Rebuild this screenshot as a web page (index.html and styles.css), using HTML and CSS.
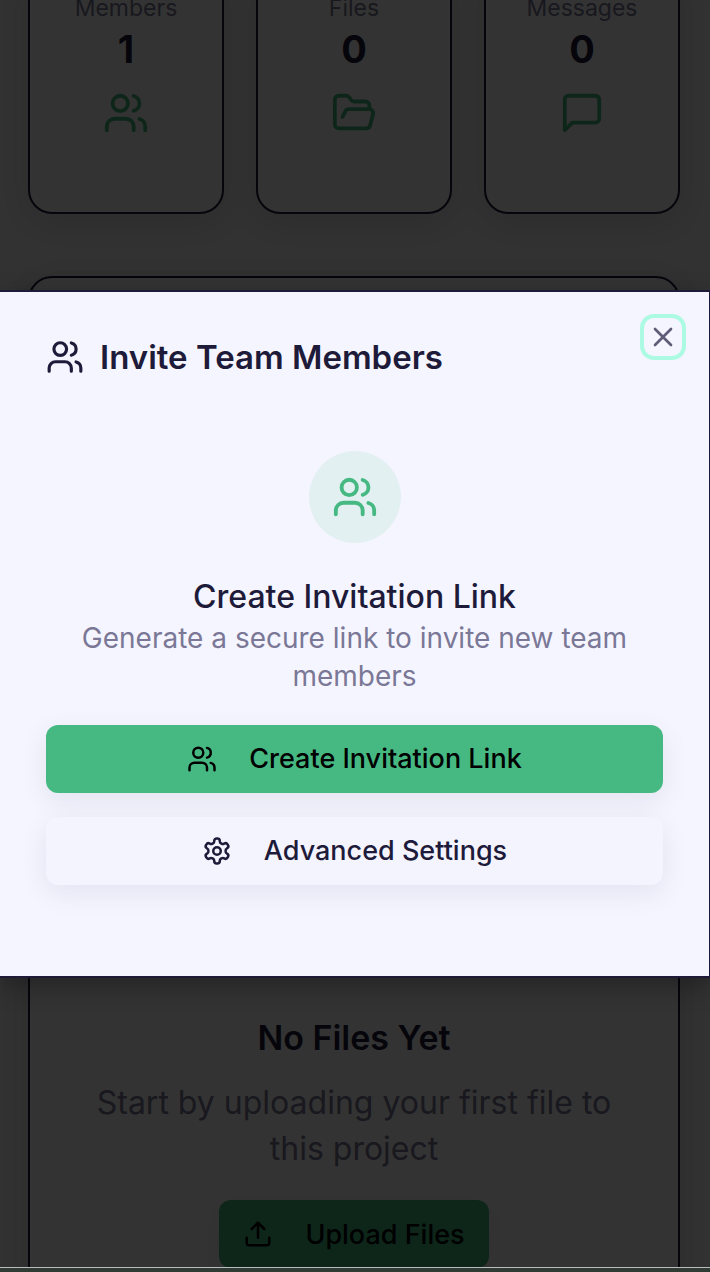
FILE: index.html
```html
<!DOCTYPE html>
<html lang="en">
<head>
<meta charset="utf-8">
<meta name="viewport" content="width=device-width, initial-scale=1">
<title>Invite Team Members</title>
<link rel="stylesheet" href="styles.css">
</head>
<body>
<svg class="sprite" aria-hidden="true">
  <symbol id="users" viewBox="0 0 24 24"><path d="M16 21v-2a4 4 0 0 0-4-4H6a4 4 0 0 0-4 4v2"/><circle cx="9" cy="7" r="4"/><path d="M22 21v-2a4 4 0 0 0-3-3.87"/><path d="M16 3.13a4 4 0 0 1 0 7.75"/></symbol>
  <symbol id="folder" viewBox="0 0 24 24"><path d="m6 14 1.5-2.9A2 2 0 0 1 9.24 10H20a2 2 0 0 1 1.94 2.5l-1.54 6a2 2 0 0 1-1.95 1.5H4a2 2 0 0 1-2-2V5a2 2 0 0 1 2-2h3.9a2 2 0 0 1 1.69.9l.81 1.2a2 2 0 0 0 1.67.9H18a2 2 0 0 1 2 2v2"/></symbol>
  <symbol id="message" viewBox="0 0 24 24"><path d="M21 15a2 2 0 0 1-2 2H7l-4 4V5a2 2 0 0 1 2-2h14a2 2 0 0 1 2 2z"/></symbol>
  <symbol id="close" viewBox="0 0 24 24"><path d="M18 6 6 18M6 6l12 12"/></symbol>
  <symbol id="settings" viewBox="0 0 24 24"><path d="M12.22 2h-.44a2 2 0 0 0-2 2v.18a2 2 0 0 1-1 1.73l-.43.25a2 2 0 0 1-2 0l-.15-.08a2 2 0 0 0-2.73.73l-.22.38a2 2 0 0 0 .73 2.73l.15.1a2 2 0 0 1 1 1.72v.51a2 2 0 0 1-1 1.74l-.15.09a2 2 0 0 0-.73 2.73l.22.38a2 2 0 0 0 2.73.73l.15-.08a2 2 0 0 1 2 0l.43.25a2 2 0 0 1 1 1.73V20a2 2 0 0 0 2 2h.44a2 2 0 0 0 2-2v-.18a2 2 0 0 1 1-1.73l.43-.25a2 2 0 0 1 2 0l.15.08a2 2 0 0 0 2.73-.73l.22-.39a2 2 0 0 0-.73-2.73l-.15-.08a2 2 0 0 1-1-1.74v-.5a2 2 0 0 1 1-1.74l.15-.09a2 2 0 0 0 .73-2.73l-.22-.38a2 2 0 0 0-2.73-.73l-.15.08a2 2 0 0 1-2 0l-.43-.25a2 2 0 0 1-1-1.73V4a2 2 0 0 0-2-2z"/><circle cx="12" cy="12" r="3"/></symbol>
  <symbol id="upload" viewBox="0 0 24 24"><path d="M12 15V3M17 8l-5-5-5 5M21 15v4a2 2 0 0 1-2 2H5a2 2 0 0 1-2-2v-4"/></symbol>
</svg>
<div class="app">
  <div class="screen">
    <main class="page">
      <section class="stats">
        <div class="card stat">
          <span class="stat-label">Members</span>
          <strong class="stat-value">1</strong>
          <svg class="icon icon-lg"><use href="#users"/></svg>
        </div>
        <div class="card stat">
          <span class="stat-label">Files</span>
          <strong class="stat-value">0</strong>
          <svg class="icon icon-lg"><use href="#folder"/></svg>
        </div>
        <div class="card stat">
          <span class="stat-label">Messages</span>
          <strong class="stat-value">0</strong>
          <svg class="icon icon-lg"><use href="#message"/></svg>
        </div>
      </section>
      <section class="card files">
        <h2 class="files-title">No Files Yet</h2>
        <p class="files-text">Start by uploading your first file to this project</p>
        <button class="btn btn-primary" type="button"><svg class="icon icon-sm"><use href="#upload"/></svg>Upload Files</button>
      </section>
    </main>
    <div class="overlay">
      <div class="dialog" role="dialog" aria-modal="true" aria-labelledby="dialog-title">
        <header class="dialog-header">
          <svg class="icon icon-md"><use href="#users"/></svg>
          <h1 class="dialog-title" id="dialog-title">Invite Team Members</h1>
        </header>
        <button class="close" type="button" aria-label="Close"><svg class="icon icon-close"><use href="#close"/></svg></button>
        <div class="badge"><svg class="icon icon-lg"><use href="#users"/></svg></div>
        <h2 class="invite-title">Create Invitation Link</h2>
        <p class="invite-text">Generate a secure link to invite new team members</p>
        <div class="actions">
          <button class="btn btn-primary" type="button"><svg class="icon icon-sm"><use href="#users"/></svg>Create Invitation Link</button>
          <button class="btn btn-plain" type="button"><svg class="icon icon-sm"><use href="#settings"/></svg>Advanced Settings</button>
        </div>
      </div>
    </div>
  </div>
  <div class="strip"></div>
</div>
</body>
</html>
```
FILE: styles.css
```css
:root {
  --ink: #1e1b3a;
  --muted: #7a7896;
  --green: #46b982;
  --surface: #f5f5ff;
}

* { box-sizing: border-box; }

body {
  margin: 0;
  font-family: Inter, "Liberation Sans", sans-serif;
  color: var(--ink);
}

h1, h2, p { margin: 0; }

.sprite { display: none; }

.icon {
  flex: none;
  fill: none;
  stroke: currentColor;
  stroke-width: 2;
  stroke-linecap: round;
  stroke-linejoin: round;
}
.icon-sm { width: 30px; height: 30px; }
.icon-close { width: 32px; height: 32px; }
.icon-md { width: 38px; height: 38px; }
.icon-lg { width: 46px; height: 46px; color: var(--green); }

.app {
  display: grid;
  grid-template-rows: 1fr 4px;
  height: 100vh;
}

.screen {
  position: relative;
  min-height: 0;
  overflow: hidden;
  background: #f8f8fc;
  border-bottom: 1px solid #b8bcc0;
}

.strip { background: #303c33; }

.page {
  display: flex;
  flex-direction: column;
  gap: 62px;
  margin-top: -40px;
  padding: 0 30px 0 28px;
}

.card {
  background: #fff;
  border: 2px solid var(--ink);
  border-radius: 24px;
  box-shadow: 0 8px 32px rgba(30, 27, 58, 0.14);
}

.stats {
  display: grid;
  grid-template-columns: repeat(3, 1fr);
  gap: 32px;
}

.stat {
  display: flex;
  flex-direction: column;
  align-items: center;
  padding: 30px 8px 76px;
}
.stat-label { font-size: 23px; line-height: 32px; color: var(--muted); }
.stat-value { font-size: 38px; line-height: 50px; margin-bottom: 16px; }

.files {
  display: flex;
  flex-direction: column;
  align-items: center;
  padding: 736px 56px 64px;
  text-align: center;
}
.files-title { font-size: 34px; line-height: 48px; font-weight: 600; }
.files-text {
  margin: 18px 0 28px;
  font-size: 32px;
  line-height: 46px;
  color: var(--muted);
}

.btn {
  display: flex;
  align-items: center;
  justify-content: center;
  gap: 32px;
  min-height: 68px;
  padding: 0 24px;
  border: 0;
  border-radius: 12px;
  font-family: inherit;
  font-size: 27px;
  font-weight: 500;
  box-shadow: 0 8px 28px rgba(30, 27, 58, 0.08);
}
.btn-primary { background: var(--green); color: #000; }
.btn-plain { background: #f4f4fe; color: var(--ink); }

.overlay {
  position: absolute;
  inset: 0;
  display: flex;
  align-items: center;
  background: rgba(0, 0, 0, 0.8);
}

.dialog {
  position: relative;
  flex: 1;
  padding: 42px 46px 91px;
  background: var(--surface);
  border: 2px solid var(--ink);
  border-width: 2px 1px 2px 0;
  box-shadow: 0 8px 24px rgba(0, 0, 0, 0.3);
  text-align: center;
}

.dialog-header {
  display: flex;
  align-items: center;
  gap: 16px;
}
.dialog-title { font-size: 33px; line-height: 46px; font-weight: 600; }

.close {
  position: absolute;
  top: 22px;
  right: 23px;
  display: grid;
  place-items: center;
  width: 46px;
  height: 46px;
  padding: 0;
  border: 4px solid #adfae3;
  border-radius: 14px;
  background: var(--surface);
  color: #5f5c78;
}

.badge {
  display: grid;
  place-items: center;
  width: 92px;
  height: 92px;
  margin: 71px auto 32px;
  border-radius: 50%;
  background: #e3f0f2;
}

.invite-title { font-size: 32px; line-height: 44px; font-weight: 500; }
.invite-text { font-size: 28px; line-height: 38px; color: var(--muted); }

.actions {
  display: grid;
  gap: 24px;
  margin-top: 30px;
}
```
